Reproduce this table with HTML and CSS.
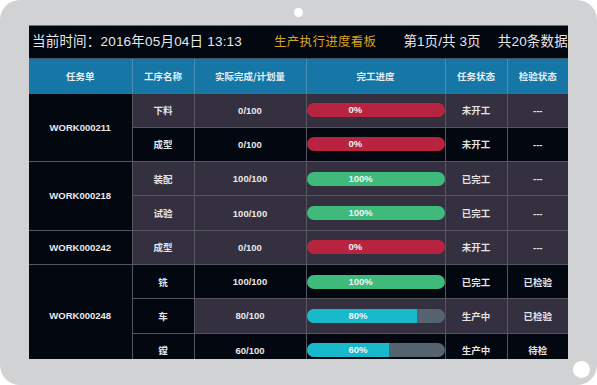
FILE: index.html
```html
<!DOCTYPE html>
<html lang="zh-CN">
<head>
<meta charset="utf-8">
<title>生产执行进度看板</title>
<link rel="stylesheet" href="styles.css">
</head>
<body>
<div class="device">
  <span class="camera"></span>
  <span class="button"></span>
  <div class="screen">
    <div class="topbar">
      <span class="time">当前时间：2016年05月04日 13:13</span>
      <span class="title">生产执行进度看板</span>
      <span class="page">第1页/共 3页</span>
      <span class="count">共20条数据</span>
    </div>
    <table class="board">
      <colgroup>
        <col class="c1"><col class="c2"><col class="c3"><col class="c4"><col class="c5"><col class="c6">
      </colgroup>
      <thead>
        <tr><th>任务单</th><th>工序名称</th><th>实际完成/计划量</th><th>完工进度</th><th>任务状态</th><th>检验状态</th></tr>
      </thead>
      <tbody>
        <tr class="g">
          <td class="order" rowspan="2">WORK000211</td>
          <td class="cn">下料</td><td class="num">0/100</td>
          <td class="prog"><div class="bar"><div class="fill red" style="width:100%"></div><span class="pct">0%</span></div></td>
          <td class="cn">未开工</td><td class="num">---</td>
        </tr>
        <tr class="k">
          <td class="cn">成型</td><td class="num">0/100</td>
          <td class="prog"><div class="bar"><div class="fill red" style="width:100%"></div><span class="pct">0%</span></div></td>
          <td class="cn">未开工</td><td class="num">---</td>
        </tr>
        <tr class="g">
          <td class="order" rowspan="2">WORK000218</td>
          <td class="cn">装配</td><td class="num">100/100</td>
          <td class="prog"><div class="bar"><div class="fill green" style="width:100%"></div><span class="pct">100%</span></div></td>
          <td class="cn">已完工</td><td class="num">---</td>
        </tr>
        <tr class="g">
          <td class="cn">试验</td><td class="num">100/100</td>
          <td class="prog"><div class="bar"><div class="fill green" style="width:100%"></div><span class="pct">100%</span></div></td>
          <td class="cn">已完工</td><td class="num">---</td>
        </tr>
        <tr class="g">
          <td class="order">WORK000242</td>
          <td class="cn">成型</td><td class="num">0/100</td>
          <td class="prog"><div class="bar"><div class="fill red" style="width:100%"></div><span class="pct">0%</span></div></td>
          <td class="cn">未开工</td><td class="num">---</td>
        </tr>
        <tr class="k">
          <td class="order" rowspan="3">WORK000248</td>
          <td class="cn">铣</td><td class="num">100/100</td>
          <td class="prog"><div class="bar"><div class="fill green" style="width:100%"></div><span class="pct">100%</span></div></td>
          <td class="cn">已完工</td><td class="cn">已检验</td>
        </tr>
        <tr class="g">
          <td class="cn dark">车</td><td class="num">80/100</td>
          <td class="prog"><div class="bar"><div class="fill cyan" style="width:80%"></div><span class="pct">80%</span></div></td>
          <td class="cn">生产中</td><td class="cn">已检验</td>
        </tr>
        <tr class="k">
          <td class="cn">镗</td><td class="num">60/100</td>
          <td class="prog"><div class="bar"><div class="fill cyan" style="width:60%"></div><span class="pct">60%</span></div></td>
          <td class="cn">生产中</td><td class="cn">待检</td>
        </tr>
      </tbody>
    </table>
  </div>
</div>
</body>
</html>
```
FILE: styles.css
```css
* { box-sizing: border-box; }
html, body { margin: 0; padding: 0; background: #ffffff; }
body { width: 597px; height: 385px; overflow: hidden; }

.device {
  position: relative;
  width: 597px;
  height: 385px;
  background: #d1d2d4;
  border-radius: 20px;
  padding: 25px 0 0 29px;
}
.camera {
  position: absolute;
  left: 294px;
  top: 8px;
  width: 9px;
  height: 9px;
  border-radius: 50%;
  background: #ffffff;
}
.button {
  position: absolute;
  left: 573px;
  top: 361px;
  width: 17px;
  height: 17px;
  border-radius: 50%;
  background: #ffffff;
}

.screen {
  width: 539px;
  height: 334px;
  overflow: hidden;
  background: #020710;
  border-top: 1px solid #70747c;
}

.topbar {
  height: 33px;
  display: flex;
  align-items: center;
  padding: 0 0 4px 3px;
  font-family: "Liberation Sans", "Noto Sans CJK SC", sans-serif;
  font-size: 13.5px;
  color: #e6e8ea;
  white-space: nowrap;
  border-bottom: 1px solid #3e5566;
}
.time { letter-spacing: 0.2px; }
.title {
  margin-left: 32px;
  font-family: "Noto Sans CJK SC", sans-serif;
  font-size: 12.5px;
  letter-spacing: 0.3px;
  color: #d9a21c;
}
.page { margin-left: 27px; letter-spacing: 0.1px; }
.count { margin-left: 17px; letter-spacing: 0.2px; }

.board {
  width: 539px;
  border-collapse: collapse;
  table-layout: fixed;
  font-family: "Liberation Sans", "Noto Sans CJK SC", sans-serif;
  color: #e8e8ec;
}
.c1 { width: 103px; }
.c2 { width: 62px; }
.c3 { width: 112px; }
.c4 { width: 139px; }
.c5 { width: 62px; }
.c6 { width: 61px; }

.board th {
  height: 34px;
  background: #1677a6;
  border-left: 1px solid #4b8fb3;
  border-bottom: 1px solid #4a6a80;
  font-family: "Noto Sans CJK SC", sans-serif;
  font-weight: 700;
  font-size: 9.5px;
  color: #e9eef2;
  padding: 0;
}
.board th:first-child { border-left: none; }

.board td {
  height: 34.3px;
  padding: 0;
  text-align: center;
  vertical-align: middle;
  border: 1px solid #55565f;
  white-space: nowrap;
}
.board td:last-child { border-right: none; }
.board tr.g td { background: #34303f; }
.board tr.k td { background: #020710; }
.board tr td.order { background: #020710; border-left: none; }
.board tr td.dark { background: #020710; }

.order, .num, .pct {
  font-family: "Liberation Sans", sans-serif;
  font-weight: 700;
  font-size: 9.5px;
}
.cn {
  font-family: "Noto Sans CJK SC", sans-serif;
  font-size: 9.5px;
  font-weight: 700;
  color: #e4e4e8;
}

.prog { padding: 0 3px 0 3px; }
.bar {
  display: grid;
  height: 14px;
  border-radius: 7px;
  background: #566370;
  overflow: hidden;
}
.fill { grid-area: 1 / 1; height: 14px; }
.pct {
  grid-area: 1 / 1;
  justify-self: start;
  align-self: center;
  padding-left: 42px;
  line-height: 14px;
  color: #f2f4f6;
}
.red { background: #b82440; }
.green { background: #3eba7b; }
.cyan { background: #19b9cc; }
```
